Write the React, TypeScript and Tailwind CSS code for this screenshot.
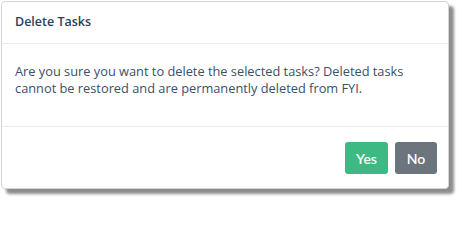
import React from "react";

const App = () => {
  return (
    <div className="w-[462px] h-[201px] bg-white pl-[1px] pt-[1px] font-['Open_Sans',sans-serif]">
      <div className="w-[448px] h-[188px] flex flex-col bg-white border border-[#d4d4d4] rounded-[4px] shadow-[5px_5px_3px_rgba(0,0,0,0.45)]">
        {/* Header */}
        <div className="h-[42px] flex items-center px-[13px] border-b border-[#e9ecef]">
          <h3 className="text-[12.5px] font-semibold text-[#2c3e5a]">Delete Tasks</h3>
        </div>

        {/* Body */}
        <div className="h-[83px] px-[13px] pt-[19px] border-b border-[#e9ecef]">
          <p className="text-[12.8px] leading-[17px] text-[#3d4f66]">
            Are you sure you want to delete the selected tasks? Deleted tasks cannot be restored and are permanently deleted from FYI.
          </p>
        </div>

        {/* Footer */}
        <div className="flex-1 flex items-start justify-end gap-[7px] pt-[15px] pr-[11px]">
          <button className="w-[43px] h-[32px] rounded-[3px] bg-[#3fb983] text-white text-[14px] font-semibold font-['Lato',sans-serif]">Yes</button>
          <button className="w-[42px] h-[32px] rounded-[3px] bg-[#6c757e] text-white text-[14px] font-semibold font-['Lato',sans-serif]">No</button>
        </div>
      </div>
    </div>
  );
};

export default App;
